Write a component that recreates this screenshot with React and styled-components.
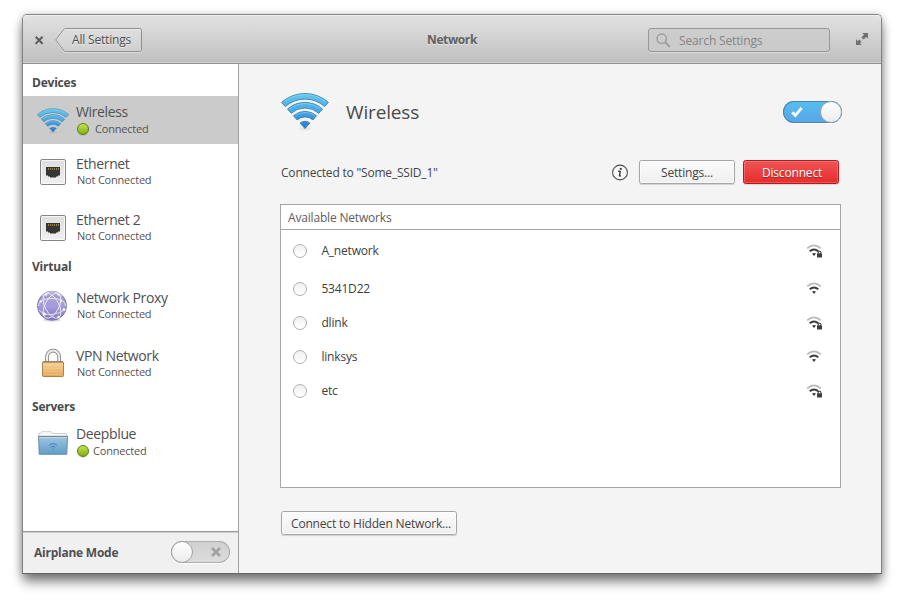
import React from "react";
import styled, { createGlobalStyle, css } from "styled-components";

const GlobalStyle = createGlobalStyle`
  *, *::before, *::after { box-sizing: border-box; }
  body {
    margin: 0;
    background: #fff;
    font-family: "Open Sans", "Noto Sans", sans-serif;
    font-size: 12px;
    line-height: 16px;
    letter-spacing: -0.18px;
    color: #4d4d4d;
  }
  svg { display: block; flex: none; }
`;

const Stage = styled.div`
  width: 900px;
  height: 600px;
  overflow: hidden;
  padding: 14px 0 0 22px;
`;

const Window = styled.main`
  width: 860px;
  height: 560px;
  display: flex;
  flex-direction: column;
  border: 1px solid #858585;
  border-bottom-color: #666;
  border-radius: 5px 5px 0 0;
  background: #f4f4f4;
  box-shadow: 0 9px 12px -1px rgba(0, 0, 0, 0.47), 0 1px 9px rgba(0, 0, 0, 0.25);
`;

const Header = styled.header`
  height: 49px;
  flex: none;
  display: grid;
  grid-template-columns: 32px 1fr 182px 51px;
  align-items: center;
  border-bottom: 1px solid #929292;
  border-radius: 4px 4px 0 0;
  background: linear-gradient(#e2e2e2, #bfbfbf);
  box-shadow: inset 0 1px 0 #f0f0f0, inset 0 -1px 0 #cecece;
`;

const CloseSlot = styled.button`
  border: 0;
  background: none;
  padding: 2px 0 0 12px;
`;

const HeaderMiddle = styled.div`
  display: flex;
  align-items: center;
  padding-top: 2px;
`;

const BackButton = styled.button`
  display: grid;
  width: 87px;
  height: 24px;
  padding: 0;
  border: 0;
  background: none;
  font: inherit;
  letter-spacing: -0.18px;
  color: #4f4f4f;
  > * { grid-area: 1 / 1; }
`;

const BackLabel = styled.span`
  padding: 4px 0 0 17px;
  text-align: left;
  white-space: nowrap;
  text-shadow: 0 1px 0 rgba(255, 255, 255, 0.5);
`;

const WindowTitle = styled.h1`
  margin: 0 0 1px 285px;
  font-size: 12px;
  font-weight: 700;
  letter-spacing: -0.38px;
  color: #606060;
  text-shadow: 0 1px 0 rgba(255, 255, 255, 0.5);
`;

const Search = styled.div`
  height: 24px;
  margin-top: 2px;
  display: flex;
  align-items: center;
  gap: 8px;
  padding: 1px 0 0 7px;
  border: 1px solid #979797;
  border-radius: 3px;
  letter-spacing: -0.15px;
  color: #858585;
  background: linear-gradient(#cdcdcd, #cacaca);
  box-shadow: 0 1px 0 rgba(255, 255, 255, 0.35);
`;

const Expand = styled.div`
  padding-left: 26px;
`;

const Body = styled.div`
  flex: 1;
  display: flex;
  min-height: 0;
`;

const Sidebar = styled.nav`
  width: 216px;
  flex: none;
  display: flex;
  flex-direction: column;
  border-right: 1px solid #a0a0a0;
  background: #fff;
`;

const SideList = styled.div`
  flex: 1;
`;

const GroupTitle = styled.h2`
  margin: 0;
  height: ${(p) => p.$height}px;
  line-height: ${(p) => p.$height}px;
  padding-left: 9px;
  padding-top: ${(p) => p.$drop || 0}px;
  font-size: 12px;
  font-weight: 700;
  letter-spacing: -0.22px;
  color: #4a4a4a;
`;

const Device = styled.div`
  height: 48px;
  margin-top: ${(p) => p.$before}px;
  display: grid;
  grid-template-columns: 53px 1fr;
  align-items: center;
  background: ${(p) => (p.$selected ? "#cbcbcb" : "transparent")};
`;

const DeviceIcon = styled.div`
  width: 34px;
  height: 34px;
  margin-left: 13px;
`;

const DeviceName = styled.div`
  font-size: 14px;
  line-height: 16px;
  letter-spacing: -0.36px;
  color: #505050;
`;

const Status = styled.div`
  height: 16px;
  display: flex;
  align-items: center;
  gap: ${(p) => p.$gap || 0}px;
  padding-left: 1px;
  padding-top: ${(p) => (p.$gap ? 2 : 0)}px;
  font-size: 11px;
  letter-spacing: -0.2px;
  color: #555;
`;

const Dot = styled.span`
  width: 12px;
  height: 12px;
  border: 1px solid #567f11;
  border-radius: 50%;
  background: linear-gradient(#c2e44c, #83ad16);
  box-shadow: 0 1px 0 rgba(0, 0, 0, 0.1);
`;

const SideFooter = styled.footer`
  height: 42px;
  flex: none;
  display: flex;
  align-items: center;
  justify-content: space-between;
  padding: 0 8px 1px 11px;
  border-top: 1px solid #979797;
  background: #f0f0f0;
  box-shadow: inset 0 1px 0 #cfcfcf;
  font-weight: 700;
  letter-spacing: -0.24px;
  color: #505050;
`;

const FooterLabel = styled.span`
  padding-top: 2px;
`;

const Track = styled.div`
  width: 59px;
  height: 22px;
  display: flex;
  align-items: center;
  justify-content: space-between;
  flex-direction: ${(p) => (p.$on ? "row-reverse" : "row")};
  border-radius: 11px;
  ${(p) =>
    p.$on
      ? css`
          background: linear-gradient(#56bfec, #5aa4e9);
          box-shadow: inset 0 0 0 1px #4887b6, 0 1px 0 #fff;
        `
      : css`
          background: linear-gradient(#d0d0d0, #dcdcdc);
          box-shadow: inset 0 0 0 1px #aeaeae, 0 1px 0 #fff;
        `}
`;

const Knob = styled.span`
  width: 22px;
  height: 22px;
  border: 1px solid #a4a4a4;
  border-radius: 50%;
  background: linear-gradient(#fff, #ececec);
`;

const Mark = styled.span`
  padding: ${(p) => (p.$on ? "0 0 0 8px" : "0 9px 0 0")};
`;

const Panel = styled.section`
  flex: 1;
  display: flex;
  flex-direction: column;
  align-items: flex-start;
  padding: 26px 40px 0 41px;
`;

const PanelHead = styled.div`
  align-self: stretch;
  height: 44px;
  display: flex;
  align-items: center;
  padding-left: 1px;
`;

const PanelTitle = styled.h3`
  flex: 1;
  margin: 0 0 0 17px;
  font-size: 19px;
  font-weight: 400;
  line-height: 26px;
  letter-spacing: -0.15px;
  color: #4a4a4a;
`;

const Switch = styled.div`
  margin-right: -1px;
`;

const ConnectionRow = styled.div`
  align-self: stretch;
  margin-top: 26px;
  height: 24px;
  display: flex;
  align-items: center;
  padding: 0 2px 0 1px;
  color: #454545;
`;

const ConnectionText = styled.span`
  flex: 1;
  padding-top: 1px;
  letter-spacing: -0.2px;
`;

const Button = styled.button`
  width: ${(p) => p.$width}px;
  height: 24px;
  margin-left: ${(p) => p.$left || 0}px;
  margin-top: ${(p) => p.$top || 0}px;
  padding: 1px 0 0 ${(p) => p.$nudge || 0}px;
  border-radius: 2.5px;
  font: inherit;
  letter-spacing: -0.18px;
  white-space: nowrap;
  ${(p) =>
    p.$danger
      ? css`
          border: 1px solid #b9171c;
          color: #fff;
          background: linear-gradient(#f05454, #e62d2d);
          box-shadow: inset 0 0 0 1px rgba(255, 255, 255, 0.2), 0 1px 1px rgba(0, 0, 0, 0.12);
          text-shadow: 0 1px 1px rgba(90, 0, 0, 0.5);
        `
      : css`
          border: 1px solid #a6a6a6;
          color: #444;
          background: linear-gradient(#fbfbfb, #efefef);
          box-shadow: inset 0 0 0 1px rgba(255, 255, 255, 0.6), 0 1px 1px rgba(0, 0, 0, 0.15);
        `}
`;

const Networks = styled.div`
  align-self: stretch;
  height: 284px;
  margin-top: 20px;
  border: 1px solid #a6a6a6;
  background: #fff;
`;

const NetworksHead = styled.div`
  height: 25px;
  padding: 5px 0 0 7px;
  border-bottom: 1px solid #a6a6a6;
  line-height: 16px;
  color: #5d5d5d;
`;

const NetworkRow = styled.div`
  height: ${(p) => p.$height}px;
  display: grid;
  grid-template-columns: 28.4px 1fr 34px;
  align-items: center;
  padding-left: 12px;
  color: #404040;
`;

const Radio = styled.span`
  width: 14px;
  height: 14px;
  border: 1px solid #b0b0b0;
  border-radius: 50%;
  background: linear-gradient(#f1f1f1, #fff);
`;

/* Point on a circle around the fan's apex, `deg` away from straight up. */
const polar = (cx, cy, r, deg) => {
  const a = (deg * Math.PI) / 180;
  return `${(cx + r * Math.sin(a)).toFixed(2)} ${(cy - r * Math.cos(a)).toFixed(2)}`;
};

const band = (cx, cy, inner, outer, deg) =>
  `M${polar(cx, cy, outer, -deg)}A${outer} ${outer} 0 0 1 ${polar(cx, cy, outer, deg)}` +
  `L${polar(cx, cy, inner, deg)}A${inner} ${inner} 0 0 0 ${polar(cx, cy, inner, -deg)}Z`;

const wifiBands = [
  [29.7, 35.3],
  [20.8, 26.4],
  [11.9, 17.4],
];

function WifiFan({ width, height, id }) {
  return (
    <svg width={width} height={height} viewBox="0 0 48 38">
      <defs>
        <linearGradient id={id} x1="0" y1="0" x2="0" y2="36" gradientUnits="userSpaceOnUse">
          <stop offset="0" stopColor="#63cbee" />
          <stop offset="0.5" stopColor="#45a8ea" />
          <stop offset="1" stopColor="#2877d8" />
        </linearGradient>
      </defs>
      <ellipse cx="24" cy="35.8" rx="6" ry="1.8" fill="#000" opacity="0.06" />
      <g fill={`url(#${id})`} stroke="#3a7fae" strokeWidth="0.9" strokeLinejoin="round">
        {wifiBands.map(([a, b]) => (
          <path key={a} d={band(24, 35.8, a, b, 41.5)} />
        ))}
        <path d={`M24 35.6L${polar(24, 35.8, 7.6, -40)}A8.5 8.5 0 0 1 ${polar(24, 35.8, 7.6, 40)}Z`} />
      </g>
      <g fill="none" stroke="#a5e4fa" strokeWidth="0.7" opacity="0.7">
        {wifiBands.map(([, b]) => (
          <path key={b} d={`M${polar(24, 35.8, b - 1, -38)}A${b - 1} ${b - 1} 0 0 1 ${polar(24, 35.8, b - 1, 38)}`} />
        ))}
      </g>
    </svg>
  );
}

function WirelessIcon() {
  return (
    <svg width="34" height="34" viewBox="0 0 34 34">
      <svg x="1" y="5" width="32" height="26">
        <WifiFan width={32} height={26} id="fanSmall" />
      </svg>
    </svg>
  );
}

function EthernetIcon() {
  return (
    <svg width="34" height="34" viewBox="0 0 34 34">
      <defs>
        <linearGradient id="plate" x1="0" y1="0" x2="0" y2="1">
          <stop offset="0" stopColor="#dedede" />
          <stop offset="1" stopColor="#f0f0f0" />
        </linearGradient>
      </defs>
      <rect x="4.5" y="4.5" width="25" height="25" rx="1.6" fill="url(#plate)" stroke="#858585" />
      <rect x="5.5" y="5.5" width="23" height="23" rx="0.8" fill="none" stroke="#fff" opacity="0.75" />
      <path d="M10 12h14v8.5h-2v1h-2v1h-6v-1h-2v-1h-2z" fill="#353535" />
      <path d="M12.5 13.2v1.6M14.5 13.2v1.6M16.5 13.2v1.6M18.5 13.2v1.6M20.5 13.2v1.6M22.3 13.2v1.6" stroke="#b9a44e" strokeWidth="0.9" />
    </svg>
  );
}

function ProxyIcon() {
  return (
    <svg width="34" height="34" viewBox="0 0 34 34">
      <defs>
        <linearGradient id="globe" x1="0" y1="0" x2="0" y2="1">
          <stop offset="0" stopColor="#a5a0cc" />
          <stop offset="0.5" stopColor="#a79dda" />
          <stop offset="1" stopColor="#8376bf" />
        </linearGradient>
      </defs>
      <ellipse cx="16" cy="31" rx="9" ry="1.6" fill="#000" opacity="0.15" />
      <circle cx="16" cy="16.8" r="14.5" fill="url(#globe)" stroke="#7b73a8" strokeWidth="0.9" />
      <g fill="none" stroke="#fff" strokeWidth="0.85" opacity="0.85">
        <ellipse cx="16" cy="16.8" rx="7" ry="13.6" transform="rotate(28 16 16.8)" />
        <ellipse cx="16" cy="16.8" rx="7" ry="13.6" transform="rotate(-28 16 16.8)" />
        <path d="M2.3 17Q3 9.5 16 9.5T29.7 17M3 21Q8 26.5 16 25.5T29.4 20.5" />
        <path d="M6 7Q16-1.5 26 7" />
      </g>
      <g fill="#fff">
        <circle cx="10" cy="5.4" r="1.2" />
        <circle cx="22.4" cy="5.4" r="1.2" />
        <circle cx="4.7" cy="12.5" r="1.1" />
        <circle cx="28" cy="20.6" r="1.3" />
        <circle cx="8.2" cy="25" r="1.6" />
        <circle cx="22.6" cy="28" r="1.2" />
        <circle cx="25" cy="12" r="1.1" />
      </g>
    </svg>
  );
}

function VpnIcon() {
  return (
    <svg width="34" height="34" viewBox="0 0 34 34">
      <defs>
        <linearGradient id="brass" x1="0" y1="0" x2="0" y2="1">
          <stop offset="0" stopColor="#f4d5a0" />
          <stop offset="1" stopColor="#e5a757" />
        </linearGradient>
      </defs>
      <path d="M11 15V10a6.1 6.4 0 0 1 12.2 0v5" fill="none" stroke="#7d7d7d" strokeWidth="3.6" />
      <path d="M11 15V10a6.1 6.4 0 0 1 12.2 0v5" fill="none" stroke="#efefef" strokeWidth="2" />
      <rect x="6.5" y="14.8" width="21" height="14.7" rx="0.8" fill="url(#brass)" stroke="#ab8250" />
      <path d="M7 15h20" stroke="#86694a" strokeWidth="0.9" />
      <path d="M8 18.5h18M8 21.5h18M8 24.5h18M8 27.5h18" stroke="#fbdda2" strokeWidth="0.9" opacity="0.3" />
    </svg>
  );
}

function ServerIcon() {
  return (
    <svg width="34" height="34" viewBox="0 0 34 34">
      <defs>
        <linearGradient id="folder" x1="0" y1="0" x2="0" y2="1">
          <stop offset="0" stopColor="#9fc5df" />
          <stop offset="1" stopColor="#609dc9" />
        </linearGradient>
      </defs>
      <path d="M3 13V8.5h1.8l1-1.8h9.5l1 1.8h14.2V13z" fill="#f8f8f8" stroke="#c9c9c9" strokeWidth="0.9" />
      <path d="M2.5 11.5h29l-.7 17.8H3.2z" fill="url(#folder)" stroke="#63879f" strokeWidth="0.9" />
      <path d="M3 12.6h28" stroke="#c5e1f2" strokeWidth="0.8" />
      <path d="M2.4 11.3h29.2" stroke="#797f84" strokeWidth="0.8" />
      <g fill="none" stroke="#3c81b5" strokeWidth="0.9">
        <path d="M13 20.3q4-3.2 8 0M14.6 22.3q2.4-1.9 4.8 0" />
      </g>
      <path d="M16 23.8h2l-1 1z" fill="#3c81b5" />
    </svg>
  );
}

function SignalIcon({ locked }) {
  return (
    <svg width="17" height="14" viewBox="0 0 17 14">
      <path d="M1.2 4.4Q8-1.6 14.8 4.4" fill="none" stroke="#b9b9b9" strokeWidth="1.8" />
      <path d="M3.7 7.3q4.3-3.6 8.6 0" fill="none" stroke="#3c3c3c" strokeWidth="1.9" />
      <path d="M6 9.6q2-1.4 4 0L8 12z" fill="#3c3c3c" />
      {locked && (
        <g>
          <path d="M10.2 8.2h5.8V14h-5.8z" fill="#fff" />
          <rect x="11" y="9.3" width="5" height="4.2" rx="0.6" fill="#3c3c3c" />
          <path d="M12.1 9.8V8.6a1.4 1.4 0 0 1 2.8 0v1.2" fill="none" stroke="#3c3c3c" strokeWidth="1.1" />
        </g>
      )}
    </svg>
  );
}

function InfoIcon() {
  return (
    <svg width="17" height="17" viewBox="0 0 17 17">
      <circle cx="9" cy="8.5" r="7.4" fill="#fafafa" stroke="#505050" strokeWidth="1.1" />
      <circle cx="9.8" cy="4.9" r="1.1" fill="#3b3b3b" />
      <path d="M7.2 7.2h1.6q.6 0 .4.7L8.4 11.5q-.1.8 1.5.2" fill="none" stroke="#3b3b3b" strokeWidth="1.4" />
    </svg>
  );
}

const groups = [
  {
    title: "Devices",
    height: 32,
    drop: 3,
    items: [
      { name: "Wireless", icon: WirelessIcon, gap: 6, selected: true, before: 0 },
      { name: "Ethernet", icon: EthernetIcon, before: 4 },
      { name: "Ethernet 2", icon: EthernetIcon, before: 8 },
    ],
  },
  {
    title: "Virtual",
    height: 28,
    drop: 1,
    items: [
      { name: "Network Proxy", icon: ProxyIcon, before: 2 },
      { name: "VPN Network", icon: VpnIcon, before: 10 },
    ],
  },
  {
    title: "Servers",
    height: 36,
    drop: 1,
    items: [{ name: "Deepblue", icon: ServerIcon, gap: 4, before: -6 }],
  },
];

const networks = [
  { ssid: "A_network", locked: true, height: 42 },
  { ssid: "5341D22", locked: false, height: 34 },
  { ssid: "dlink", locked: true, height: 34 },
  { ssid: "linksys", locked: false, height: 34 },
  { ssid: "etc", locked: true, height: 34 },
];

export default function App() {
  return (
    <Stage>
      <GlobalStyle />
      <Window>
        <Header>
          <CloseSlot aria-label="Close">
            <svg width="9" height="9" viewBox="0 0 9 9">
              <path d="M.6.8l7 7M7.6.8L.6 7.8" stroke="#5c5c5c" strokeWidth="2" />
            </svg>
          </CloseSlot>
          <HeaderMiddle>
            <BackButton>
              <svg width="87" height="26" viewBox="0 0 87 26">
                <path d="M10.5 1.5H84.5q2 0 2 2V22.5q0 2-2 2H10.5Q9 24.5 8.5 23.5L.7 12.8 8.5 2.5q.7-1 2-1z" fill="none" stroke="#fff" opacity="0.4" />
                <path d="M10.5.5H84.5q2 0 2 2V21.5q0 2-2 2H10.5Q9.5 23.5 8.8 22.5L.7 12 8.8 1.5q.7-1 1.7-1z" fill="#fff" fillOpacity="0.16" stroke="#8f8f8f" />
              </svg>
              <BackLabel>All Settings</BackLabel>
            </BackButton>
            <WindowTitle>Network</WindowTitle>
          </HeaderMiddle>
          <Search>
            <svg width="15" height="15" viewBox="0 0 15 15">
              <circle cx="5.7" cy="5.7" r="4.7" fill="none" stroke="#9b9b9b" strokeWidth="1.4" />
              <path d="M9 9l4.8 4.8" stroke="#9b9b9b" strokeWidth="1.9" />
            </svg>
            Search Settings
          </Search>
          <Expand>
            <svg width="12" height="12" viewBox="0 0 12 12">
              <path d="M6.2 0H12v5.8L10.2 4 7.6 6.6 5.4 4.4 8 1.8zM0 6.2l1.8 1.8 1.5-1.5 2.2 2.2L4 10.2 5.8 12H0z" fill="#727272" />
            </svg>
          </Expand>
        </Header>
        <Body>
          <Sidebar>
            <SideList>
              {groups.map((g) => (
                <React.Fragment key={g.title}>
                  <GroupTitle $height={g.height} $drop={g.drop}>{g.title}</GroupTitle>
                  {g.items.map(({ name, icon: Icon, gap, selected, before }) => (
                    <Device key={name} $selected={selected} $before={before}>
                      <DeviceIcon><Icon /></DeviceIcon>
                      <div>
                        <DeviceName>{name}</DeviceName>
                        <Status $gap={gap}>
                          {gap && <Dot />}
                          {gap ? "Connected" : "Not Connected"}
                        </Status>
                      </div>
                    </Device>
                  ))}
                </React.Fragment>
              ))}
            </SideList>
            <SideFooter>
              <FooterLabel>Airplane Mode</FooterLabel>
              <Track>
                <Knob />
                <Mark>
                  <svg width="10" height="10" viewBox="0 0 10 10">
                    <path d="M1 1l8 8M9 1L1 9" stroke="#a0a0a0" strokeWidth="2.5" />
                  </svg>
                </Mark>
              </Track>
            </SideFooter>
          </Sidebar>
          <Panel>
            <PanelHead>
              <WifiFan width={48} height={38} id="fanLarge" />
              <PanelTitle>Wireless</PanelTitle>
              <Switch>
                <Track $on>
                  <Knob />
                  <Mark $on>
                    <svg width="12" height="12" viewBox="0 0 12 12">
                      <path d="M1.2 6.2l3.2 3.3L10.6 1.8" fill="none" stroke="#fff" strokeWidth="2.8" />
                    </svg>
                  </Mark>
                </Track>
              </Switch>
            </PanelHead>
            <ConnectionRow>
              <ConnectionText>Connected to "Some_SSID_1"</ConnectionText>
              <InfoIcon />
              <Button $width={96} $left={11}>Settings...</Button>
              <Button $width={96} $left={8} $nudge={2} $danger>Disconnect</Button>
            </ConnectionRow>
            <Networks>
              <NetworksHead>Available Networks</NetworksHead>
              {networks.map((n) => (
                <NetworkRow key={n.ssid} $height={n.height}>
                  <Radio />
                  {n.ssid}
                  <SignalIcon locked={n.locked} />
                </NetworkRow>
              ))}
            </Networks>
            <Button $width={176} $left={1} $top={23} $nudge={4}>Connect to Hidden Network...</Button>
          </Panel>
        </Body>
      </Window>
    </Stage>
  );
}
